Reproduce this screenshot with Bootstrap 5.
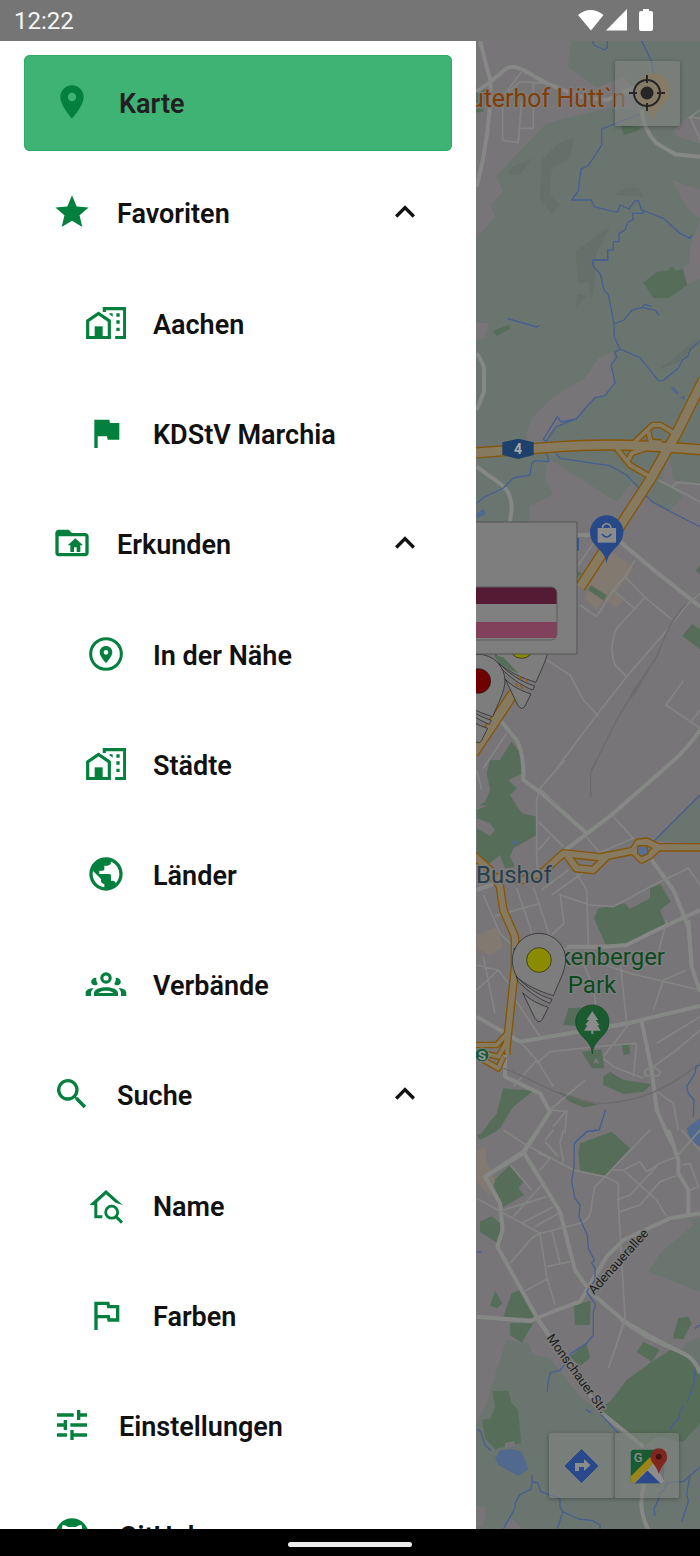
<!DOCTYPE html>
<html lang="de">
<head>
<meta charset="utf-8">
<meta name="viewport" content="width=device-width, initial-scale=1">
<title>Karte</title>
<link href="https://cdn.jsdelivr.net/npm/bootstrap@5.3.0/dist/css/bootstrap.min.css" rel="stylesheet">
<style>
  body { font-family: Roboto, "Liberation Sans", sans-serif; background: #000; }
  .status-bar { height: 41px; background: #757575; color: #f5f5f5; padding: 0 47px 0 14px; font-size: 24px; }
  .system-nav { height: 27px; background: #000; padding-top: 3px; }
  .home-pill { width: 124px; height: 5px; background: #ececec; }
  .drawer { width: 68%; padding: 14px 24px; scrollbar-width: none; }
  .drawer::-webkit-scrollbar { display: none; }
  .menu-list { gap: 14px; }
  .menu-row { height: 96px; padding: 2px 27px 0 28px; gap: 27px; color: #111; font-size: 27px; font-weight: 600; line-height: 32px; border: 0; border-radius: 6px; background: none; text-align: left; text-decoration: none; }
  .menu-row.group-row { gap: 25px; }
  .menu-row.sub-row { padding-left: 62px; }
  .menu-row.current { background: #3fb373; box-shadow: inset 0 0 0 1px #2cab64; color: #221e22; }
  .menu-icon { width: 40px; height: 40px; margin-top: -4px; fill: #03803e; flex: none; }
  .menu-icon.chevron { fill: #111; }
  .sub-list { padding-top: 15px; gap: 14px; }
  .map-pane { background: #787578; }
  .map-button { background: rgba(130, 133, 130, .6); border: 0; box-shadow: 0 1px 4px rgba(0, 0, 0, .3); border-radius: 2px; width: 65px; height: 65px; padding: 0; }
  .locate-spot { top: 20px; right: 20px; }
  .map-tools { bottom: 31px; right: 21px; }
  .map-tools .map-button + .map-button { border-left: 1px solid #636b66; }
  .forest { fill: #6a756f; } .land { fill: #787578; } .park { fill: #566e59; } .lake { fill: #52698f; } .sand { fill: #827a70; }
  .streets path { fill: none; stroke: #838583; stroke-width: 5; stroke-linejoin: round; }
  .streets .wide { stroke: #868886; stroke-width: 12; }
  .streets .rail { stroke: #6b6a6d; stroke-width: 4; }
  .rivers path { fill: none; stroke: #465f91; stroke-width: 4; stroke-linejoin: round; }
  .route-edge { fill: none; stroke: #865607; stroke-linejoin: round; }
  .route-fill { fill: none; stroke: #867a60; stroke-linejoin: round; }
  .map-label { stroke: #7c7c7c; stroke-width: 3px; paint-order: stroke; stroke-linejoin: round; font-size: 24px; }
  .inn-label { font-size: 25px; }
  .street-label { font-size: 13px; fill: #1c1c1c; }
</style>
</head>
<body>
<div class="vh-100 d-flex flex-column overflow-hidden">
  <header class="status-bar d-flex align-items-center justify-content-between flex-shrink-0">
    <span>12:22</span>
    <svg width="75" height="24" viewBox="0 0 75 24" fill="#fff" aria-label="WLAN, Mobilfunk, Akku">
      <path d="M0 6Q12.500-4 25.500 6L13 21.500Z"/><path d="M49 0V21.500H28Z"/><path d="M65 0h6v2h2q2 0 2 2v16q0 2-2 2H63q-2 0-2-2V4q0-2 2-2h2z"/>
    </svg>
  </header>

  <div class="d-flex flex-fill overflow-hidden">
    <nav class="drawer bg-white overflow-auto flex-shrink-0" aria-label="Hauptmenü">
      <div class="menu-list d-flex flex-column">
        <a href="#karte" class="menu-row current d-flex align-items-center" aria-current="page">
          <svg class="menu-icon" viewBox="0 0 24 24"><path d="M12 2C8.130 2 5 5.130 5 9c0 5.250 7 13 7 13s7-7.750 7-13c0-3.870-3.130-7-7-7zm0 9.500a2.500 2.500 0 1 1 0-5 2.500 2.500 0 0 1 0 5z"/></svg>
          <span>Karte</span>
        </a>
        <div>
          <button type="button" class="menu-row group-row d-flex align-items-center w-100" data-bs-toggle="collapse" data-bs-target="#favoriten" aria-expanded="true">
            <svg class="menu-icon" viewBox="0 0 24 24"><path d="M12 17.270L18.180 21l-1.640-7.030L22 9.240l-7.190-.610L12 2 9.190 8.630 2 9.240l5.460 4.730L5.820 21z"/></svg>
            <span class="flex-fill">Favoriten</span>
            <svg class="menu-icon chevron" viewBox="0 0 24 24"><path d="M12 8l-6 6 1.410 1.410L12 10.830l4.590 4.580L18 14z"/></svg>
          </button>
          <div class="collapse show" id="favoriten"><div class="d-flex flex-column sub-list">
            <a href="#aachen" class="menu-row sub-row d-flex align-items-center"><svg class="menu-icon" viewBox="0 0 24 24"><use href="#icon-city"/></svg><span>Aachen</span></a>
            <a href="#marchia" class="menu-row sub-row d-flex align-items-center"><svg class="menu-icon" viewBox="0 0 24 24"><path d="M14.400 6L14 4H5v17h2v-7h5.600l.4 2h7V6z"/></svg><span>KDStV Marchia</span></a>
          </div></div>
        </div>
        <div>
          <button type="button" class="menu-row group-row d-flex align-items-center w-100" data-bs-toggle="collapse" data-bs-target="#erkunden" aria-expanded="true">
            <svg class="menu-icon" viewBox="0 0 24 24"><path d="M20 6h-8l-2-2H4c-1.100 0-2 .9-2 2v12c0 1.100.9 2 2 2h16c1.100 0 2-.9 2-2V8c0-1.100-.9-2-2-2zm0 12H4V8h16v10z"/><path d="M14 9.200L9.400 13.400H11v4h2.200v-2.900h1.600v2.900H17v-4h1.600z"/></svg>
            <span class="flex-fill">Erkunden</span>
            <svg class="menu-icon chevron" viewBox="0 0 24 24"><path d="M12 8l-6 6 1.410 1.410L12 10.830l4.590 4.580L18 14z"/></svg>
          </button>
          <div class="collapse show" id="erkunden"><div class="d-flex flex-column sub-list">
            <a href="#naehe" class="menu-row sub-row d-flex align-items-center"><svg class="menu-icon" viewBox="0 0 24 24"><circle cx="12" cy="12" r="9.200" fill="none" stroke="#03803e" stroke-width="1.800"/><path fill-rule="evenodd" d="M12 7.200c-2.100 0-3.800 1.600-3.800 3.800 0 2.700 3.800 6.400 3.800 6.400s3.800-3.700 3.800-6.400c0-2.200-1.700-3.800-3.800-3.800zm0 2.400a1.400 1.400 0 1 1 0 2.800 1.400 1.400 0 0 1 0-2.800z"/></svg><span>In der Nähe</span></a>
            <a href="#staedte" class="menu-row sub-row d-flex align-items-center"><svg class="menu-icon" viewBox="0 0 24 24"><use href="#icon-city"/></svg><span>Städte</span></a>
            <a href="#laender" class="menu-row sub-row d-flex align-items-center"><svg class="menu-icon" viewBox="0 0 24 24"><path d="M12 2C6.480 2 2 6.480 2 12s4.480 10 10 10 10-4.480 10-10S17.520 2 12 2zm-1 17.930c-3.950-.490-7-3.850-7-7.930 0-.620.080-1.210.210-1.790L9 15v1c0 1.100.9 2 2 2v1.930zm6.900-2.540c-.260-.810-1-1.390-1.900-1.390h-1v-3c0-.550-.450-1-1-1H8v-2h2c.550 0 1-.450 1-1V7h2c1.100 0 2-.9 2-2v-.410c2.930 1.190 5 4.060 5 7.410 0 2.080-.8 3.970-2.100 5.390z"/></svg><span>Länder</span></a>
            <a href="#verbaende" class="menu-row sub-row d-flex align-items-center"><svg class="menu-icon overflow-visible" viewBox="0 0 24 24"><circle cx="12" cy="8.400" r="2.500" fill="none" stroke="#03803e" stroke-width="1.900"/><path fill-rule="evenodd" d="M4.800 19.200v-1.600C4.800 15.300 8 14 12 14s7.200 1.300 7.200 3.600v1.600zM7.500 17.400h9c-1-1-2.700-1.300-4.500-1.300s-3.500.3-4.500 1.300z"/><path id="side-person" d="M6.200 8.200C4.500 8 3.100 9.200 3.100 10.600c0 1.400 1.200 2.400 2.900 2.100.9-.2 1.200-.8.8-1.300-.6-1-.8-2-.6-3.200zM-.2 19.200v-1.700c0-1.800 2-3 4.800-2.900C3.400 15.500 3 16.500 3 17.600v1.600z"/><use href="#side-person" transform="matrix(-1 0 0 1 24 0)"/></svg><span>Verbände</span></a>
          </div></div>
        </div>
        <div>
          <button type="button" class="menu-row group-row d-flex align-items-center w-100" data-bs-toggle="collapse" data-bs-target="#suche" aria-expanded="true">
            <svg class="menu-icon" viewBox="0 0 24 24"><path d="M15.500 14h-.790l-.280-.270A6.500 6.500 0 1 0 13.730 14.430l.270.280v.790l5 4.990L20.490 19zm-6 0a4.500 4.500 0 1 1 0-9 4.500 4.500 0 0 1 0 9z"/></svg>
            <span class="flex-fill">Suche</span>
            <svg class="menu-icon chevron" viewBox="0 0 24 24"><path d="M12 8l-6 6 1.410 1.410L12 10.830l4.590 4.580L18 14z"/></svg>
          </button>
          <div class="collapse show" id="suche"><div class="d-flex flex-column sub-list">
            <a href="#name" class="menu-row sub-row d-flex align-items-center"><svg class="menu-icon" viewBox="0 0 24 24"><path d="M12 3L2 12h3v8h4.800v-1.800H6.800V10.400L12 5.600l5.700 5.100L22 12z"/><circle cx="15.400" cy="16.300" r="3.600" fill="none" stroke="#03803e" stroke-width="1.700"/><path d="M18 19l3.600 3.600" stroke="#03803e" stroke-width="1.800"/></svg><span>Name</span></a>
            <a href="#farben" class="menu-row sub-row d-flex align-items-center"><svg class="menu-icon" viewBox="0 0 24 24"><path d="M12.360 6l.4 2H18v6h-3.360l-.4-2H7V6h5.360M14 4H5v17h2v-7h5.600l.4 2h7V6h-5.600L14 4z"/></svg><span>Farben</span></a>
          </div></div>
        </div>
        <a href="#einstellungen" class="menu-row d-flex align-items-center"><svg class="menu-icon" viewBox="0 0 24 24"><path d="M3 17v2h6v-2H3zM3 5v2h10V5H3zm10 16v-2h8v-2h-8v-2h-2v6h2zM7 9v2H3v2h4v2h2V9H7zm14 4v-2H11v2h10zm-6-4h2V7h4V5h-4V3h-2v6z"/></svg><span>Einstellungen</span></a>
        <a href="#github" class="menu-row d-flex align-items-center"><svg class="menu-icon" viewBox="0 0 24 24"><circle cx="12" cy="12" r="10"/><path fill="#fff" d="M6.400 5.800c1.600.2 2.600.9 3.400 1.400h4.400c.8-.5 1.800-1.200 3.400-1.400.6 1.600.4 2.700.2 3.200 1 4-1 7-3 7.500V22H9v-5.500C6 15.500 5 12 6.200 9 6 8 6 7 6.400 5.800z"/></svg><span>GitHub</span></a>
      </div>
    </nav>

    <main class="map-pane position-relative flex-fill overflow-hidden">
      <svg class="w-100 h-100 d-block" viewBox="476 41 224 1488" preserveAspectRatio="xMinYMin slice" role="img" aria-label="Stadtplan Aachen">
        <defs>
          <g id="icon-city"><path d="M1 20.700V10.700L7.500 6.300 14 10.700v10z" fill="none" stroke="#03803e" stroke-width="1.900"/><path d="M5.200 14H10v7H5.200z"/><path d="M11 5.400V3.400h12.200v17.300h-5.700" fill="none" stroke="#03803e" stroke-width="1.900"/><path d="M14 6.200h2v2l-2-1.500zM18.200 6.200h2v2h-2zM18.200 10.400h2v2h-2zM18.200 14.800h2v2h-2z"/></g>
          <g id="house-pin" stroke="#202020" stroke-width="2" fill="#7d7d7d">
            <path d="M140 170C130 152 127 136 127 120A80 80 0 1 1 287 120C287 150 265 190 250 227 210 215 165 195 140 170Z"/>
            <path d="M138 168L145 185C170 210 205 237 240 250L246 238C210 228 165 200 138 168Z"/>
            <path d="M158 218L195 295Q207 314 217 298L235 262C205 252 180 240 158 218Z"/>
          </g>
        </defs>

        <!-- woods, parks, water -->
        <path class="forest" d="M476 41H700V525H476Z"/>
        <g transform="scale(.333333) translate(1410 0)">
          <path class="land" d="M10 123H305L292 200 380 262 460 230 520 290 510 335 430 320 230 370 78 528 100 575 62 615 75 650 10 725ZM690 350H655L610 390 625 412 690 430ZM605 540L690 570V660L650 620ZM660 740L690 660V780H660Z"/>
          <path d="M125 500L190 475 150 525 115 525ZM215 480L265 430 315 410 300 470 245 510 240 580 270 615 245 640 210 600ZM435 585L470 562 505 565 520 590ZM320 750L420 680 370 780Z" fill="#66706a"/>
          <path class="park" d="M10 270L48 265 40 335 10 338ZM452 375L515 380 505 392 460 406Z"/>
        </g>
        <g transform="scale(.333333) translate(1410 750)">
          <path class="land" d="M690 0H660V40L640 55 650 105 690 85ZM10 218L58 220 42 265 10 275ZM430 305L385 325 345 385 250 440 185 505 165 570 200 585 230 570 255 530 315 510 370 445 405 435 435 398 425 345ZM235 625L440 755 485 700 545 755 595 785 640 740 575 690 595 610 610 690 690 700V825H178V768L250 733 225 690Z"/>
          <path class="park" d="M520 98L560 65 592 62 607 48 617 62 638 57 652 105 597 144H550ZM68 243L115 224 122 237 80 258Z"/>
          <path d="M318 0H375V90L365 145 355 98H322ZM322 130L350 138 318 175ZM565 360L690 260 630 335Z" fill="#66706a"/>
          <path class="lake" d="M601 415L610 409 627 428 620 434ZM630 443L642 436 646 451ZM20 790L40 778 48 792 20 806Z"/>
        </g>
        <g transform="scale(.333333) translate(1410 1530)">
          <path class="land" d="M178 30H690V60H10V40H178Z"/>
          <path class="sand" d="M380 150L430 130 492 175 440 245 458 275 440 293 405 270 380 300 345 265Z"/>
          <path class="park" d="M320 182L336 190 322 205ZM362 225L411 256 402 272 354 240ZM666 342L690 358V418L637 378ZM690 165L677 182 690 192ZM125 695L70 780H155L152 730Z"/>
          <path d="M545 468L500 545 482 570 488 540Z" fill="#6e6e70"/>
        </g>
        <g transform="scale(.333333) translate(1410 2280)">
          <path class="park" d="M60 0H155L160 40 115 60 140 85 120 105 155 160 200 170V225L130 265 120 290 135 320 105 325 90 285 60 310 20 290V140L45 125 60 90 50 40ZM385 445L465 430 480 447 540 415V385L572 373 602 425 570 450 590 500 470 560H410L372 475Z"/>
          <path class="land" d="M20 175L60 190 75 210 60 228 20 205ZM20 135L50 138 20 150Z"/>
          <path class="forest" d="M690 105L550 240 690 252Z"/>
          <path class="sand" d="M20 525L80 500 100 560 60 585 20 565Z"/>
          <path class="lake" d="M125 245L145 241 135 258Z"/>
        </g>
        <g transform="scale(.333333) translate(1410 2760)">
          <path class="park" d="M295 265L345 262 350 320 280 315ZM335 395L395 388 403 445H365ZM455 372L478 370 480 402 460 405ZM400 470L420 455 460 480 545 492 520 515 460 522 400 495ZM265 515L385 555 340 562 300 545ZM100 505L190 512 130 560 90 625 40 655 30 645 80 580Z"/>
          <path class="land" d="M378 412L388 430H370Z"/>
          <path class="lake" d="M690 595L650 625 665 670 690 680Z"/>
        </g>
        <g transform="scale(.333333) translate(1410 3390)">
          <path class="park" d="M330 40L425 5 480 55 405 138 330 122 325 70ZM75 148L120 105 160 155 145 175 162 195 100 232 70 165ZM30 275L65 258 90 280 92 318 80 338 30 305ZM75 482L97 520 82 535 60 527ZM125 490L150 480 195 565 100 560ZM312 525L362 512 360 585H315ZM20 15L60 0H85L30 30ZM625 565L655 560 665 580 640 628 608 625Z"/>
          <path class="forest" d="M690 262L660 270 670 285 570 370 535 425 690 485Z"/>
          <path class="sand" d="M20 60L45 50 50 100 75 150 60 200 20 150Z"/>
        </g>
        <g transform="scale(.333333) translate(1410 3960)">
          <path class="forest" d="M110 60L175 70 190 105 240 115 330 230 385 270 440 330 650 70 690 50V640H10V330L50 250 80 150Z"/>
          <path class="land" d="M10 560H48L40 620H10ZM120 595L165 630H95Z"/>
          <path class="park" d="M385 265L420 245 470 180 545 125 600 90 650 100 690 150V310L640 365 560 350 520 380ZM120 10H190L155 68 120 45ZM500 95L520 65 570 90 545 125ZM350 70L360 115 330 138 300 110ZM68 213L115 212 125 250 145 270 153 370 75 387 45 355 37 300 62 295 75 262Z"/>
          <path class="land" d="M105 370L132 362 136 378 105 382Z"/>
          <path class="lake" d="M75 415L90 392 120 387 155 395 175 448 145 468 85 435Z"/>
        </g>

        <!-- streets and railway -->
        <g class="streets">
          <g transform="scale(.333333) translate(1410 0)">
            <path class="wide" d="M30 123L62 245 20 275M62 245Q62 400 20 560M62 245L110 205Q135 195 160 210L230 250 330 290 410 300 500 260M515 330Q520 390 560 430L615 463 690 470"/>
            <path d="M155 215L98 290V422L145 427 155 300M190 250V385L148 385M98 290L150 245 230 250M690 355L660 350 690 420M655 355L690 330"/>
          </g>
          <g transform="scale(.333333) translate(1410 750)">
            <path class="wide" d="M20 310Q42 340 42 360V425L20 480M20 650L100 708Q125 735 125 775L120 815"/>
            <path d="M565 690L690 755M605 712L620 697 690 703"/>
          </g>
          <g transform="scale(.333333) translate(1410 1530)">
            <path class="wide" d="M320 75H365L450 95 545 175 690 290M90 630L140 690Q162 730 160 810L215 850 350 970M690 660Q650 720 590 770L430 910 280 1025"/>
            <path d="M690 250L650 285 600 350 470 500 380 615 260 775M605 328L525 262 465 200 495 150M525 262L440 355Q415 410 435 465L470 500M495 298L430 240 380 320 330 285M430 240L465 200M325 165L370 100M230 450L300 495 340 570 385 618M640 512L588 585 690 655M660 640L690 600M110 670L40 775"/>
            <path class="rail" d="M650 280Q600 330 560 440L500 530 440 630 365 780"/>
          </g>
          <g transform="scale(.333333) translate(1410 2280)">
            <path class="rail" d="M380 0L362 35V112"/>
            <path class="wide" d="M545 300L610 390 655 500 665 610M20 390L75 370M290 560H400L470 555 560 510 690 450"/>
            <path d="M285 0L210 85 200 120V300L205 340M210 85L262 140M345 225L390 280M430 170L490 235 385 280M205 185L280 260M240 230L205 270M140 385L180 500 200 600M190 380L240 530M270 400L282 490 240 530M270 405L360 435 430 440 550 375 655 325 690 375M320 340L350 390 355 555M350 330L245 405M75 468L210 430M40 405L90 520 130 560M295 330L215 390M20 30L35 90"/>
          </g>
          <g transform="scale(.333333) translate(1410 2760)">
            <path class="wide" d="M20 290L150 365 480 308 690 258M515 305L545 450 560 570 605 670M105 350V470L210 520 240 575 160 700 45 770 90 850 98 930 82 980 205 1200M655 0L665 140 690 215"/>
            <path d="M525 450L550 440 572 455 565 468 525 466ZM20 135L85 150 20 210M85 150L115 190M40 110L75 280M150 365L200 420 250 500M200 420L130 500M200 430L240 395 430 375 500 370M400 415L430 440 520 475M345 480L240 570M480 308L400 410M500 370L490 470M390 330L490 310M240 60L330 110 480 160 690 210M340 130L370 200 385 320M450 120L470 310M590 0L560 120 490 150M550 270L580 180 650 150M560 370L690 290M550 440L620 390 690 330M555 510L610 550 625 630M290 570L250 620M245 570L290 575 285 640M130 230L210 350"/>
            <path class="rail" d="M100 445C200 480 290 550 400 550 520 545 600 500 690 430"/>
          </g>
          <g transform="scale(.333333) translate(1410 3390)">
            <path class="wide" d="M160 65L270 245 315 420 365 490 465 575 560 630 620 660M205 0L160 65 45 140M595 0L625 90V130L655 180V250M20 560L180 573 260 540 330 515 350 480 410 380 460 330 600 265 690 250M205 570L230 605"/>
            <path d="M100 0L160 40 310 120 405 140 540 0M205 70L240 85 210 120M225 35L265 80M225 30L250 0M280 0L270 40 280 95M120 105L185 180M100 240L230 200M130 260L215 165M155 280L250 230M195 290L265 250M20 205L210 310 185 325 120 400M210 310L230 440 255 525M210 310L330 280Q365 270 365 220L375 170 405 140 445 160 445 220L465 560 435 660M245 300L270 400M230 410L300 395M165 483L235 445M430 120L460 120 510 95 530 125 570 100 620 80 690 0M460 120L560 210 590 260M440 210L480 195 560 110M450 245L510 225 570 155 625 135M635 0L690 60M635 105L660 100 685 170 660 180"/>
          </g>
          <g transform="scale(.333333) translate(1410 3960)">
            <path class="wide" d="M205 0L350 210 390 275 520 380M455 0L530 50 640 100Q675 115 690 160M523 490Q500 560 535 630"/>
            <path d="M465 0L415 145"/>
          </g>
        </g>

        <g class="rivers">
          <g transform="scale(.333333) translate(1410 0)"><path d="M368 123L372 135 403 150 412 143V123M515 123L545 185 550 220M510 342L395 387V435L355 497 333 507 325 573 305 600H363L373 620 430 635H443L450 615 477 627 495 602H505L515 630 580 655 630 700 660 715 665 705M523 630L518 640H488L490 658 473 668 465 690 447 700V725H430V750H413V780H370"/></g>
          <g transform="scale(.333333) translate(1410 750)"><path d="M413 0V30H368V45L392 75 402 120 415 135 432 222 433 262 450 297 510 323 565 392H578L625 355 637 330 653 320 660 300 690 272M432 222L462 210 487 180 517 172 557 182 566 196M517 172L523 163 545 169M450 297L435 307 440 322 423 345 435 398 405 437 375 443 318 507 273 516 262 500 220 568 228 575 258 530 315 508M113 206L200 231 208 227M258 610L270 625 420 647 470 675 545 755 650 810 690 830M230 610L237 635 195 632 185 640 180 675 130 684 100 714 40 743 20 760"/></g>
          <g transform="scale(.333333) translate(1410 2280)"><path d="M690 105L550 245"/></g>
          <g transform="scale(.333333) translate(1410 2760)"><path d="M407 568L388 630 350 635 313 670M690 435L678 440 675 460 650 500 655 520 672 540 670 590"/></g>
          <g transform="scale(.333333) translate(1410 3390)"><path d="M380 0L350 5 313 40 312 110 305 155 315 205 330 225 327 260 352 315 355 355 373 390 365 400 375 415V450L350 485 377 525 370 545V615L350 640 303 670M20 366H35M690 585L675 595"/></g>
          <g transform="scale(.333333) translate(1410 3960)"><path d="M303 100L290 125 270 152 242 157 235 180 232 215M348 268L363 278M385 275L445 340M675 150L672 190 652 245M642 255L630 275 625 300 613 308 600 328M22 328L32 335 45 375 63 392M185 465L187 487 182 508 150 523 135 550V565L100 627M187 487L203 487 212 515 270 535V560L278 575 325 597 368 602 390 615V627M278 575L262 627M690 440L660 467 650 520 655 545 635 605M660 467L640 485H620L590 490 582 512 570 518 565 540 552 565 555 587"/></g>
        </g>

        <!-- trunk roads -->
        <g transform="scale(.333333) translate(1410 750)">
          <path class="route-edge" stroke-width="20" d="M490 580L548 525H572L610 548M535 545L542 575 575 578M440 595L480 645 540 680M475 630L485 610 540 590"/>
          <path class="route-edge" stroke-width="34" d="M10 609L270 590C400 580 540 585 700 600M700 390L620 550 540 690 330 1013M130 1330L10 1510"/>
          <path class="route-fill" stroke-width="12" d="M490 580L548 525H572L610 548M535 545L542 575 575 578M440 595L480 645 540 680M475 630L485 610 540 590"/>
          <path class="route-fill" stroke-width="26" d="M10 609L270 590C400 580 540 585 700 600M700 390L620 550 540 690 330 1013M130 1330L10 1510"/>
          <path d="M97 577L145 566 191 577V615L145 627 97 615Z" fill="#1e406c"/>
        </g>
        <text x="518" y="454" text-anchor="middle" font-size="14" font-weight="700" fill="#a9a9a9">4</text>
        <g transform="scale(.333333) translate(1410 2280)">
          <path class="route-edge" stroke-width="26" d="M10 285L60 330 90 380 100 450 135 530V620L110 860M60 350L160 360 220 335 280 280 390 292 490 272M290 285L320 325 370 330 410 290M490 272L505 248 530 245 565 262H700M490 272L515 298 540 285 565 262"/>
          <path class="route-edge" stroke-width="20" d="M10 855H80L112 820M112 820V885M40 880L85 890 108 850M40 900L85 925 100 890"/>
          <path class="route-fill" stroke-width="18" d="M10 285L60 330 90 380 100 450 135 530V620L110 860M60 350L160 360 220 335 280 280 390 292 490 272M290 285L320 325 370 330 410 290M490 272L505 248 530 245 565 262H700M490 272L515 298 540 285 565 262"/>
          <path class="route-fill" stroke-width="12" d="M10 855H80L112 820M112 820V885M40 880L85 890 108 850M40 900L85 925 100 890"/>
          <path d="M503 258L530 257 535 280 515 290 503 280Z" fill="#566f96" stroke="#865607" stroke-width="4"/>
        </g>
        <circle cx="482" cy="1055" r="7" fill="#1b5b3b" stroke="#868886"/>
        <text x="482" y="1060" text-anchor="middle" font-size="13" font-weight="700" fill="#999">S</text>

        <!-- place names -->
        <text class="map-label inn-label" x="626" y="107" text-anchor="end" fill="#823d04">Reuterhof Hütt`n</text>
        <text class="map-label" x="476" y="883" fill="#283f4b">Bushof</text>
        <text class="map-label" x="665" y="965" text-anchor="end" fill="#0d4a20">Frankenberger</text>
        <text class="map-label" x="592" y="993" text-anchor="middle" fill="#0d4a20">Park</text>
        <text class="map-label street-label" transform="translate(594 1295) rotate(-48)">Adenauerallee</text>
        <text class="map-label street-label" transform="translate(546 1338) rotate(54)">Monschauer Str.</text>

        <!-- pins -->
        <path d="M652 122C650 108 636 105 636 90A17 17 0 0 1 670 90C670 105 655 108 652 122Z" fill="#8a6b3c"/>
        <g transform="scale(.333333) translate(1410 1530)">
          <path d="M410 163C408 118 360 112 360 66A50 50 0 0 1 460 66C460 112 412 118 410 163Z" fill="#27498a"/>
          <path d="M383 54H438V98H383Z" fill="#8b8b8b"/><path d="M398 56V48Q410 34 422 48V56" fill="none" stroke="#8b8b8b" stroke-width="5"/><path d="M396 72Q410 90 424 72" fill="none" stroke="#27498a" stroke-width="5"/>
          <path d="M320 86H324V120H320" fill="none" stroke="#1646a0" stroke-width="4"/>
          <g transform="translate(-52 290)"><use href="#house-pin"/><circle cx="207" cy="118" r="37" fill="#8b8b00" stroke="#202020" stroke-width="2"/></g>
          <path d="M72 435L100 442 145 490 120 480 85 458Z" fill="#566e59"/><path d="M148 498L154 508M166 505L172 515M137 520L143 530M152 525L157 536" stroke="#99600a" stroke-width="5"/>
          <g transform="translate(-182 393)"><use href="#house-pin"/><circle cx="207" cy="120" r="37" fill="#700000" stroke="#202020" stroke-width="2"/></g>
        </g>
        <g transform="scale(.333333) translate(1410 2760)">
          <use href="#house-pin"/><circle cx="207" cy="120" r="37" fill="#8b8b00" stroke="#202020" stroke-width="2"/>
          <path d="M367 402C365 355 317 350 317 305A50 50 0 0 1 417 305C417 350 369 355 367 402Z" fill="#1b5b30" stroke="#124522" stroke-width="2"/>
          <path d="M367 274L349 300H357L345 316H352L342 332H364V342H370V332H392L382 316H389L377 300H385Z" fill="#8b8b8b"/>
        </g>

        <!-- info window with the fraternity colours -->
        <path d="M470 522H577V654H470Z" fill="#7e7e7e" stroke="#555" stroke-width="1"/>
        <clipPath id="flag-shape"><rect x="440" y="587" width="117" height="53" rx="6"/></clipPath>
        <g clip-path="url(#flag-shape)"><path d="M440 587H560V604H440Z" fill="#561b34"/><path d="M440 604H560V622H440Z" fill="#808080"/><path d="M440 622H560V638H440Z" fill="#81415a"/></g>
        <rect x="440" y="587" width="117" height="53" rx="6" fill="none" stroke="#5c5c5c"/>
      </svg>

      <button type="button" class="map-button locate-spot position-absolute" aria-label="Mein Standort">
        <svg class="d-block" viewBox="0 0 65 65"><g fill="none" stroke="#262626" stroke-width="2"><circle cx="32" cy="32" r="13"/><path d="M32 14v8M32 42v8M14 32h8M42 32h8"/></g><circle cx="32" cy="32" r="6.500" fill="#262626"/></svg>
      </button>
      <div class="map-tools position-absolute d-flex">
        <button type="button" class="map-button" aria-label="Route"><svg class="d-block" viewBox="0 0 65 65"><path d="M32.500 16.500L49 33 32.500 49.500 16 33Z" fill="#28498b" stroke="#28498b" stroke-linejoin="round"/><path d="M28 38V32H36" fill="none" stroke="#8b8b8b" stroke-width="4"/><path d="M35 26L41.500 32 35 38Z" fill="#8b8b8b"/></svg></button>
        <button type="button" class="map-button" aria-label="Google Maps"><svg class="d-block" viewBox="0 0 65 65">
          <path d="M18 16H48V47L46 50H18L16 48V18Z" fill="#195b32"/><path d="M16 46L38 24 50 36V48L47 50H20Z" fill="#8d8d8d"/><path d="M37 24L50 16V48Z" fill="#717171"/><path d="M16 43L36 23 41 28 19 50H18L16 48Z" fill="#9b8519"/><path d="M20 50L33 37 46 50Z" fill="#28498b"/>
          <path d="M44.500 41C43 32 36 30 36 23A8.500 8.500 0 0 1 53 23C53 30 46 32 44.500 41Z" fill="#802820"/><circle cx="44.500" cy="23" r="3" fill="#43110f"/>
          <text x="23.500" y="28.500" font-size="13" font-weight="500" text-anchor="middle" fill="#8d8d8d">G</text></svg></button>
      </div>
    </main>
  </div>

  <footer class="system-nav d-flex align-items-center justify-content-center flex-shrink-0"><div class="home-pill rounded-pill"></div></footer>
</div>
<script src="https://cdn.jsdelivr.net/npm/bootstrap@5.3.0/dist/js/bootstrap.bundle.min.js"></script>
</body>
</html>
